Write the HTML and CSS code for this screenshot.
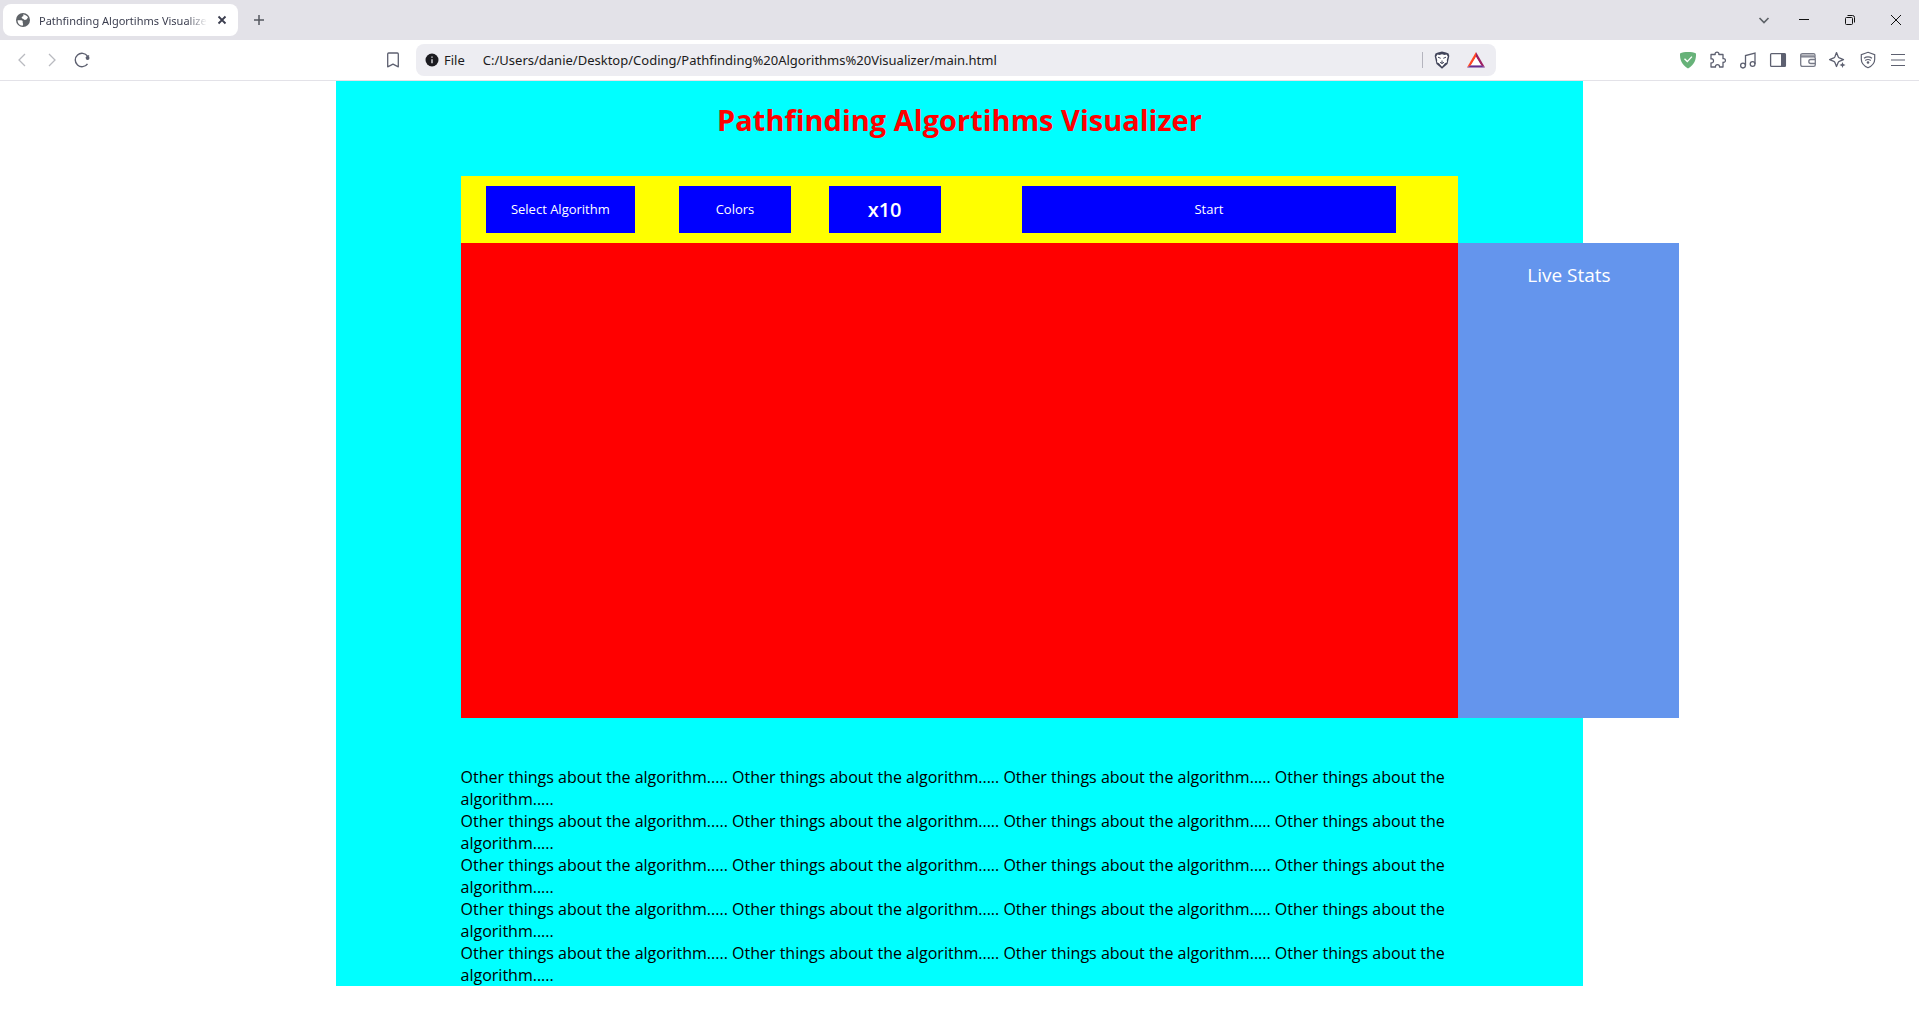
FILE: index.html
```html
<!DOCTYPE html>
<html lang="en">
<head>
<meta charset="utf-8">
<title>Pathfinding Algortihms Visualizer</title>
<link rel="stylesheet" href="styles.css">
</head>
<body>
<header class="browser">
  <div class="tab-strip">
    <div class="tab">
      <svg class="favicon" viewBox="0 0 16 16" width="16" height="16" aria-hidden="true"><circle cx="8" cy="8" r="7" fill="#5f6368"/><path d="M2.6 8.300h3.600c1.200 0 1.700.8 1.500 2-.2.900.5 1.200.4 2.300-.1.700-.5 1-.5 1.200C4.600 13.500 2.400 11.300 2.600 8.300zM8 2.400c2.400 0 4.200 1.300 5 3.100-.7.600-.8 1.700-1.700 2.100-.9.500-2.300.4-2.600-.3-.3-.8-1.500-.7-1.900-1.400-.5-.9.300-1.500 1-1.500.8-.1.800-1 .2-2z" fill="#fff"/></svg>
      <span class="tab-title">Pathfinding Algortihms Visualizer</span>
      <button class="tab-close" aria-label="Close tab"><svg viewBox="0 0 10 10" width="10" height="10"><path d="M1.500 1.500l7 7M8.500 1.500l-7 7" stroke="#3b3e4f" stroke-width="1.800"/></svg></button>
    </div>
    <button class="new-tab" aria-label="New tab"><svg viewBox="0 0 12 12" width="12" height="12"><path d="M6 1v10M1 6h10" stroke="#55585f" stroke-width="1.500"/></svg></button>
    <div class="window-controls">
      <button class="tab-search" aria-label="Search tabs"><svg viewBox="0 0 12 12" width="12" height="12"><path d="M1.500 4L6 8.500 10.500 4" fill="none" stroke="#5f6368" stroke-width="1.700"/></svg></button>
      <button aria-label="Minimize"><svg viewBox="0 0 12 12" width="12" height="12"><path d="M1 5.500h10" stroke="#111"/></svg></button>
      <button aria-label="Restore"><svg viewBox="0 0 12 12" width="12" height="12"><rect x="1.500" y="3.500" width="7" height="7" rx="1" fill="none" stroke="#111"/><path d="M3.500 1.500h5a2 2 0 0 1 2 2v5" fill="none" stroke="#111"/></svg></button>
      <button aria-label="Close"><svg viewBox="0 0 12 12" width="12" height="12"><path d="M1 1l10 10M11 1L1 11" stroke="#111"/></svg></button>
    </div>
  </div>
  <div class="toolbar">
    <nav class="history" aria-label="History">
      <button aria-label="Back"><svg viewBox="0 0 20 20" width="20" height="20"><path d="M13 4L7 10l6 6" fill="none" stroke="#b9bac0" stroke-width="1.300"/></svg></button>
      <button aria-label="Forward"><svg viewBox="0 0 20 20" width="20" height="20"><path d="M7 4l6 6-6 6" fill="none" stroke="#b9bac0" stroke-width="1.300"/></svg></button>
      <button aria-label="Reload"><svg viewBox="0 0 20 20" width="20" height="20"><path d="M15.500 6.200A6.700 6.700 0 1 0 15.500 13.800" fill="none" stroke="#5d6070" stroke-width="1.400"/><circle cx="15.600" cy="8" r="1.900" fill="#5d6070"/><path d="M14 8l3-2.500" stroke="#5d6070" stroke-width="1.300"/></svg></button>
    </nav>
    <div class="location">
      <button aria-label="Bookmark"><svg viewBox="0 0 20 20" width="20" height="20"><path d="M5.700 3h8.600q1 0 1 1v12.800L10 14.200l-5.300 2.600V4q0-1 1-1z" fill="none" stroke="#5d6070" stroke-width="1.300" stroke-linejoin="round"/></svg></button>
      <div class="address">
        <svg class="info" viewBox="0 0 14 14" width="14" height="14" aria-hidden="true"><circle cx="7" cy="7" r="6.500" fill="#1b1b20"/><path d="M7 6.200v4M7 3.500v1.300" stroke="#ededf2" stroke-width="1.300"/></svg>
        <label class="scheme" for="url">File</label>
        <input id="url" class="url" type="text" value="C:/Users/danie/Desktop/Coding/Pathfinding%20Algorithms%20Visualizer/main.html">
        <span class="divider"></span>
        <button aria-label="Brave Shields"><svg viewBox="0 0 20 20" width="20" height="20"><path d="M6 2.500L10 1.500l4 1L16.500 3.500 17.300 6 15.500 14 10 18.700 4.500 14 2.700 6 3.500 3.500z" fill="#41445a"/><path d="M5.500 4.500l2 .6L10 4.300l2.500.8 2-.6 1.300 2-1 3.500.2 2.200-2 1-3 3.500-3-3.500-2-1 .2-2.200-1-3.500z" fill="#fff"/><path d="M6 7.200l2.700 1.100M14 7.200l-2.700 1.100M8 12.300l2 1.200 2-1.200M10 10.500v3" stroke="#41445a" stroke-width="1" fill="none"/></svg></button>
        <button aria-label="Brave Rewards"><svg viewBox="0 0 20 20" width="20" height="20"><path d="M10 2L1 17.500l4-2.300L10 7z" fill="#ff4724"/><path d="M10 2l9 15.500-4-2.300L10 7z" fill="#9e1f63"/><path d="M1 17.500h18l-4-2.300H5z" fill="#662d91"/><path d="M10 7l5 8.200H5z" fill="#fff"/></svg></button>
      </div>
    </div>
    <div class="extensions">
      <button aria-label="Security extension"><svg viewBox="0 0 20 20" width="20" height="20"><path d="M10 2C13 2 16 2.500 18 3.400c.2 6-1.300 11-8 15.100C3.300 14.400 1.800 9.400 2 3.400 4 2.500 7 2 10 2z" fill="#67b279"/><path d="M6.500 8.800l2.800 2.800 4.600-5" fill="none" stroke="#fff" stroke-width="1.400"/></svg></button>
      <button aria-label="Extensions"><svg viewBox="0 0 20 20" width="20" height="20"><path d="M3 4.500h4.200C6.700 2.800 8 2.200 9 2.200s2.300.6 1.800 2.300H15v4.200c1.700-.5 2.400.7 2.400 1.700s-.7 2.300-2.400 1.800v4.800h-3.500c.3-1.700-.8-2.300-2-2.300s-2.300.6-2 2.300H3v-4.200c1.900.4 2.500-.9 2.500-2s-.7-2.300-2.500-2z" fill="none" stroke="#5d6070" stroke-width="1.300" stroke-linejoin="round"/></svg></button>
      <button aria-label="Media playlist"><svg viewBox="0 0 20 20" width="20" height="20"><path d="M7.500 15.500v-10L17 3v11" fill="none" stroke="#5d6070" stroke-width="1.300"/><circle cx="5" cy="15.600" r="2.400" fill="none" stroke="#5d6070" stroke-width="1.300"/><circle cx="14.600" cy="14" r="2.400" fill="none" stroke="#5d6070" stroke-width="1.300"/></svg></button>
      <button aria-label="Sidebar"><svg viewBox="0 0 20 20" width="20" height="20"><rect x="2.600" y="3.600" width="14.800" height="12.800" rx="1" fill="none" stroke="#5d6070" stroke-width="1.300"/><path d="M13 3.500h4.500v13H13z" fill="#5d6070"/></svg></button>
      <button aria-label="Wallet"><svg viewBox="0 0 20 20" width="20" height="20"><path d="M2.700 4.500h12.500q1.500 0 1.700 2.200H3z" fill="#a3a5ad"/><path d="M17 7V5q0-1.400-1.500-1.400h-11Q2.700 3.600 2.700 5v9.500q0 1.900 1.900 1.900h11q1.700 0 1.700-1.700V8.200q0-1.400-1.400-1.400H3M17 9.500h-4.200a2 2 0 0 0 0 4H17" fill="none" stroke="#777a87" stroke-width="1.300"/></svg></button>
      <button aria-label="Leo AI"><svg viewBox="0 0 20 20" width="20" height="20"><path d="M8.500 2.600l1.800 4.300q.3.700 1 1l4.200 1.700-4.200 1.700q-.7.300-1 1l-1.800 4.200-1.700-4.200q-.3-.7-1-1L1.600 9.600l4.200-1.700q.7-.3 1-1z" fill="none" stroke="#5d6070" stroke-width="1.300" stroke-linejoin="round"/><path d="M14.500 12l.8 2.100 2.200.9-2.200.9-.8 2.100-.8-2.100-2.200-.9 2.200-.9z" fill="#5d6070"/></svg></button>
      <button aria-label="VPN"><svg viewBox="0 0 20 20" width="20" height="20"><path d="M10 2.300l6.700 2.400v4.500c0 4-2.700 6.700-6.700 8.500-4-1.800-6.700-4.500-6.700-8.500V4.700z" fill="none" stroke="#5d6070" stroke-width="1.200"/><path d="M6 8.200q4-2.600 8 0M7.200 10.400q2.800-1.800 5.600 0" fill="none" stroke="#5d6070" stroke-width="1.200"/><circle cx="10" cy="12.500" r="1.300" fill="#5d6070"/></svg></button>
      <button aria-label="Menu"><svg viewBox="0 0 20 20" width="20" height="20"><path d="M3 4.500h14M3 10h14M3 15.500h14" stroke="#5d6070" stroke-width="1.200"/></svg></button>
    </div>
  </div>
</header>
<main class="page">
  <h1 class="title">Pathfinding Algortihms Visualizer</h1>
  <div class="container">
    <div class="controls">
      <button class="control">Select Algorithm</button>
      <button class="control">Colors</button>
      <button class="control speed">x10</button>
      <button class="control">Start</button>
    </div>
    <div class="board">
      <div class="grid"></div>
      <aside class="stats">Live Stats</aside>
    </div>
    <div class="about">
      <p>Other things about the algorithm..... Other things about the algorithm..... Other things about the algorithm..... Other things about the algorithm.....</p>
      <p>Other things about the algorithm..... Other things about the algorithm..... Other things about the algorithm..... Other things about the algorithm.....</p>
      <p>Other things about the algorithm..... Other things about the algorithm..... Other things about the algorithm..... Other things about the algorithm.....</p>
      <p>Other things about the algorithm..... Other things about the algorithm..... Other things about the algorithm..... Other things about the algorithm.....</p>
      <p>Other things about the algorithm..... Other things about the algorithm..... Other things about the algorithm..... Other things about the algorithm.....</p>
    </div>
  </div>
</main>
</body>
</html>
```
FILE: styles.css
```css
* {
  box-sizing: border-box;
  margin: 0;
  padding: 0;
}

body {
  background: #fff;
  color: #000;
  font-family: "Open Sans", "Noto Sans", sans-serif;
  font-size: 16px;
}

button {
  border: 0;
  background: none;
  font: inherit;
}

/* Browser chrome */
.browser {
  border-bottom: 1px solid #e3e2e8;
  font-family: "Noto Sans", "Open Sans", sans-serif;
}

.browser button {
  display: flex;
  align-items: center;
  justify-content: center;
  flex: none;
  width: 30px;
  height: 30px;
}

.tab-strip {
  display: flex;
  align-items: center;
  height: 40px;
  padding-left: 3px;
  background: #e3e2e8;
}

.tab {
  display: flex;
  align-items: center;
  width: 235px;
  height: 32px;
  padding-left: 12px;
  padding-right: 1px;
  border-radius: 8px;
  background: #fff;
}

.favicon {
  flex: none;
  margin-right: 8px;
}

.tab-title {
  flex: 1;
  overflow: hidden;
  white-space: nowrap;
  color: #3b3e4f;
  font-size: 11px;
  -webkit-mask-image: linear-gradient(to right, #000 148px, transparent 168px);
  mask-image: linear-gradient(to right, #000 148px, transparent 168px);
}

.new-tab {
  margin-left: 6px;
}

.window-controls {
  display: flex;
  margin-left: auto;
}

.browser .window-controls button {
  width: 46px;
}

.browser .window-controls .tab-search {
  width: 34px;
}

.toolbar {
  display: grid;
  grid-template-columns: 378fr 1118fr 423fr;
  align-items: center;
  height: 40px;
}

.history {
  display: flex;
  padding-left: 7px;
}

.location {
  display: flex;
  align-items: center;
  gap: 8px;
}

.address {
  display: flex;
  align-items: center;
  flex: 1;
  height: 32px;
  padding-left: 9px;
  padding-right: 3px;
  border-radius: 8px;
  background: #ededf2;
  color: #1b1b20;
  font-size: 13px;
}

.info {
  flex: none;
  margin-right: 5px;
}

.scheme {
  margin-right: 18px;
}

.url {
  flex: 1;
  min-width: 0;
  border: 0;
  outline: 0;
  background: none;
  color: inherit;
  font: inherit;
}

.divider {
  width: 1px;
  height: 16px;
  margin-right: 2px;
  background: #b4b4be;
}

.browser .address button {
  width: 34px;
}

.extensions {
  display: flex;
  justify-content: flex-end;
  padding-right: 6px;
}

/* Visualizer page */
.page {
  width: 65%;
  margin: 0 auto;
  background: aqua;
}

.title {
  padding: 17px 0 34px;
  color: red;
  font-size: 29px;
  font-weight: 700;
  line-height: 44px;
  text-align: center;
}

.container {
  width: 80%;
  margin: 0 auto;
}

.controls {
  display: grid;
  grid-template-columns: 20% 15% 15% 50%;
  justify-items: center;
  padding: 10px 0;
  background: yellow;
}

.control {
  width: 75%;
  height: 47px;
  padding-bottom: 1px;
  background: blue;
  color: #fff;
  font-size: 13px;
}

.speed {
  font-size: 20px;
  font-weight: 600;
}

.board {
  display: flex;
}

.grid {
  flex: 0 0 100%;
  height: 475px;
  background: red;
}

.stats {
  flex: 0 0 221px;
  padding-top: 18px;
  background: cornflowerblue;
  color: #fff;
  font-size: 19px;
  line-height: 28px;
  text-align: center;
}

.about {
  padding-top: 48px;
  line-height: 22px;
}
```
